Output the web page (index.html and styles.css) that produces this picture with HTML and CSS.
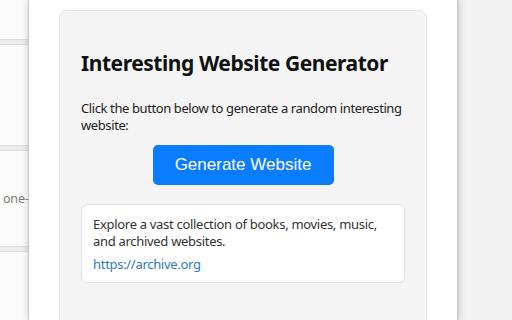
FILE: index.html
```html
<!DOCTYPE html>
<html lang="en">
<head>
<meta charset="utf-8">
<title>Interesting Website Generator</title>
<link rel="stylesheet" href="styles.css">
</head>
<body>
<div class="backdrop">
  <div class="bg-card bg-card-1"></div>
  <div class="bg-card bg-card-2"></div>
  <div class="bg-card bg-card-3"><span class="bg-text">one-</span></div>
  <div class="bg-card bg-card-4"></div>
</div>
<div class="popup">
  <div class="card">
    <h1 class="title">Interesting Website Generator</h1>
    <p class="lead">Click the button below to generate a random interesting website:</p>
    <div class="actions">
      <button class="generate" type="button">Generate Website</button>
    </div>
    <div class="result">
      <p class="result-text">Explore a vast collection of books, movies, music, and archived websites.</p>
      <a class="result-link" href="https://archive.org">https://archive.org</a>
    </div>
  </div>
</div>
<div class="backdrop-right"></div>
</body>
</html>
```
FILE: styles.css
```css
html, body {
  margin: 0;
  padding: 0;
}
body {
  width: 512px;
  height: 320px;
  overflow: hidden;
  display: flex;
  background: #f3f3f3;
  font-family: "Noto Sans", "Open Sans", sans-serif;
}
.backdrop {
  width: 28px;
  flex: none;
  display: flex;
  flex-direction: column;
  gap: 4px;
  background: #ececec;
  overflow: hidden;
}
.bg-card {
  background: #fcfcfc;
  border-top: 1px solid #dcdcdc;
  border-bottom: 1px solid #dcdcdc;
  flex: none;
}
.bg-card-1 { height: 39px; border-top: none; }
.bg-card-2 { height: 100px; }
.bg-card-3 {
  height: 95px;
  display: flex;
  align-items: center;
}
.bg-card-4 { height: 80px; }
.bg-text {
  padding-left: 3px;
  font-size: 12.5px;
  letter-spacing: -0.2px;
  color: #7a7a7a;
  white-space: nowrap;
}
.popup {
  width: 431px;
  flex: none;
  background: #fff;
  border-left: 1px solid #c8c8c8;
  border-right: 2px solid #cfcfcf;
  box-shadow: 0 0 8px rgba(0, 0, 0, 0.18);
  padding: 10px 0 0 30px;
  box-sizing: border-box;
  position: relative;
  z-index: 1;
}
.card {
  width: 368px;
  height: 340px;
  box-sizing: border-box;
  background: #f5f5f5;
  border: 1px solid #e3e3e3;
  border-radius: 8px;
  padding: 20px 21px;
}
.title {
  margin: 17px 0 0;
  font-size: 21px;
  line-height: 30px;
  font-weight: 700;
  letter-spacing: -0.45px;
  color: #111;
}
.lead {
  margin: 22px -8px 0 0;
  font-size: 13px;
  line-height: 17px;
  letter-spacing: -0.4px;
  color: #222;
}
.actions {
  display: flex;
  justify-content: center;
  margin-top: 11px;
}
.generate {
  height: 40px;
  width: 181px;
  border: none;
  border-radius: 5px;
  background: #0a7cff;
  color: #fff;
  font-family: "Liberation Sans", Arial, sans-serif;
  font-size: 17px;
  padding: 0;
}
.result {
  margin-top: 19px;
  background: #fff;
  border: 1px solid #e3e3e3;
  border-radius: 6px;
  padding: 11px 11px 9px;
}
.result-text {
  margin: 0;
  font-size: 13px;
  line-height: 17px;
  letter-spacing: -0.3px;
  color: #333;
}
.result-link {
  display: block;
  margin-top: 6px;
  font-size: 13px;
  line-height: 17px;
  letter-spacing: -0.3px;
  color: #2c7bb6;
  text-decoration: none;
}
.backdrop-right {
  flex: 1;
  background: #f3f3f3;
}
```
